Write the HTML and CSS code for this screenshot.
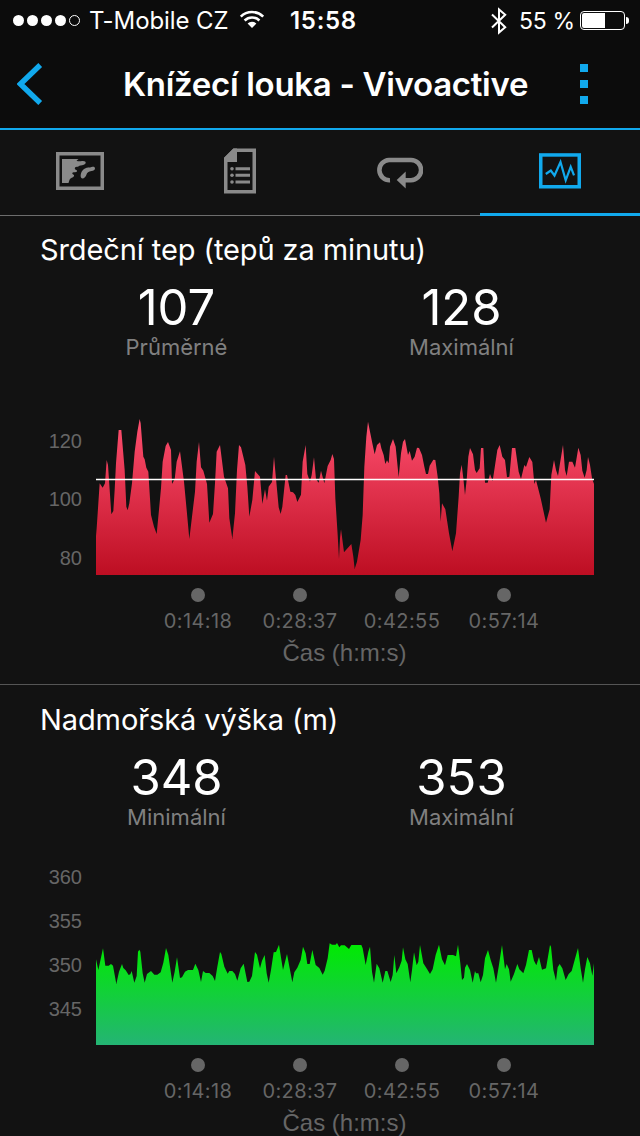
FILE: index.html
```
<!DOCTYPE html>
<html lang="cs">
<head>
    <meta charset="UTF-8">
    <meta name="viewport" content="width=device-width, initial-scale=1.0">
    <title>Knížecí louka - Vivoactive</title>
    <link rel="stylesheet" href="styles.css">
</head>
<body>
    <div class="status-bar">
        <div class="status-left">
            <div class="signal"><i></i><i></i><i></i><i></i><i class="empty"></i></div>
            <span class="carrier">T-Mobile CZ</span>
            <svg class="wifi" width="26" height="19" viewBox="0 0 26 19">
                <path d="M1.8 6.6a16 16 0 0 1 22.4 0M5.6 10.5a10.6 10.6 0 0 1 14.8 0" fill="none" stroke="#fff" stroke-width="2.6"/>
                <path d="M8.6 13.6a6.400 6.400 0 0 1 8.800 0L13 18z" fill="#fff"/>
            </svg>
        </div>
        <span class="clock">15:58</span>
        <div class="status-right">
            <svg class="bluetooth" width="16" height="28" viewBox="0 0 16 28">
                <path d="M1 7.5l13.2 12.7L8 25.5V2.5l6.2 5.3L1 20.5" fill="none" stroke="#fff" stroke-width="2"/>
            </svg>
            <span class="percent">55 %</span>
            <div class="battery"><div class="battery-level" style="width: 55%"></div></div>
            <div class="battery-cap"></div>
        </div>
    </div>

    <header class="header">
        <svg class="back" width="26" height="42" viewBox="0 0 26 42">
            <path d="M23.2 2L3.5 21l19.7 19" fill="none" stroke="#11a9ed" stroke-width="5.4"/>
        </svg>
        <h1>Knížecí louka - Vivoactive</h1>
        <div class="menu"><i></i><i></i><i></i></div>
    </header>

    <nav class="tabs">
        <div class="tab">
            <svg width="48" height="38" viewBox="0 0 48 38">
                <rect x="1.75" y="1.75" width="44.5" height="34.5" fill="none" stroke="#8a8a8a" stroke-width="3.5"/>
                <path d="M6 7h16.500l-2 1.800c2 .8 3.500.5 5.500.2 2.500-.3 4 .5 3.700 2-.3 1.800-3 2.200-5.200 2.400-1.800.3-1.800 1.400-3.500 1.400-2 0-2.500 1-2 2.400l2 1.300c.5 1.500-1.500 1.800-3.500 1.800-2 .5-1.500 1.800.5 2.700.5 2-2 2.500-3.500 3.500-1.500 1.200-1.200 3-2 4.500H6z" fill="#8a8a8a"/>
                <path d="M25 25.500c-1-3 .5-7 3.500-8.800 3-1.700 5-.7 7-1.700 2-.8 3.500-.2 3.500 1.300 0 2-1.700 2.700-3.500 2.700-3 .3-4.500 1.700-5 3.500-.7 2.500-4 5.800-5.500 3z" fill="#8a8a8a"/>
            </svg>
        </div>
        <div class="tab">
            <svg width="32" height="46" viewBox="0 0 32 46">
                <path d="M1.750 10.500L10 2.250h20.250v41.500H1.750z" fill="none" stroke="#8a8a8a" stroke-width="3.500"/>
                <path d="M0 10L9.500.5H13V14H0z" fill="#8a8a8a"/>
                <path d="M11.500 20.700H26M11.500 27.300H26M11.500 34H26" stroke="#8a8a8a" stroke-width="3"/>
                <g fill="#8a8a8a">
                    <circle cx="8" cy="20.700" r="1.800"/>
                    <circle cx="8" cy="27.300" r="1.800"/>
                    <circle cx="8" cy="34" r="1.800"/>
                </g>
            </svg>
        </div>
        <div class="tab">
            <svg class="laps" width="46" height="32" viewBox="0 0 46 32">
                <path d="M13 23.200a10 10 0 0 1-1-20.200h22a10 10 0 0 1 0 20.200h-7" fill="none" stroke="#8a8a8a" stroke-width="4.600"/>
                <path d="M28.700 14.500V31.500L19.700 23z" fill="#8a8a8a"/>
            </svg>
        </div>
        <div class="tab active">
            <svg width="42" height="36" viewBox="0 0 42 36">
                <rect x="1.750" y="1.950" width="38.500" height="31.800" fill="none" stroke="#11a9ed" stroke-width="3.500"/>
                <path d="M6.800 21l5-3.500 3.700 5L21.500 9l5.200 18.300 5-13.500 3.300 8.500" fill="none" stroke="#11a9ed" stroke-width="2.200"/>
            </svg>
        </div>
    </nav>

    <section class="panel">
        <h2>Srdeční tep (tepů za minutu)</h2>
        <div class="stats">
            <div class="stat"><span class="value">107</span><span class="label">Průměrné</span></div>
            <div class="stat"><span class="value">128</span><span class="label">Maximální</span></div>
        </div>
        <div class="chart">
            <div class="y-axis heart"><span>120</span><span>100</span><span>80</span></div>
            <svg width="498" height="165" viewBox="0 0 1494 495" preserveAspectRatio="none">
                <defs>
                    <linearGradient id="red" gradientUnits="userSpaceOnUse" x1="0" y1="27" x2="0" y2="495">
                        <stop offset="0" stop-color="#ff5070"/>
                        <stop offset="1" stop-color="#bd0e22"/>
                    </linearGradient>
                </defs>
                <polygon fill="url(#red)" points="0,495 0,378 2,355 11,220 20,233 27,220 32,150 36,165 46,313 52,303 56,240 60,160 68,60 76,60 86,180 91,290 95,301 100,280 108,220 116,125 124,65 131,27 134,40 142,140 146,148 151,173 157,185 165,315 174,350 182,372 188,310 195,235 200,155 209,108 216,96 225,120 228,222 236,208 242,155 252,124 264,215 272,300 280,387 288,320 297,245 302,155 309,96 315,172 322,182 333,222 340,338 351,312 357,220 362,125 372,105 384,200 396,235 400,325 409,387 417,310 423,180 429,105 435,112 448,165 454,230 460,320 469,270 477,183
                    492,200 499,282 507,238 513,272 518,230 528,216 534,140 539,195 548,292 554,312 559,290 569,195 573,195 583,245 591,247 598,255 604,276 615,254 620,155 629,105 634,192 642,215 647,195 654,142 660,208 668,218 675,182 685,220 695,168 704,150 709,132 714,147 718,265 725,375 729,447 732,385 735,358 744,427 766,402 772,440 776,477 783,455 794,390 800,315 805,170 811,80 816,35 822,65 829,100 836,133 843,105 852,97 856,115 863,135 868,162 873,151 878,160 882,110 891,87 899,110 908,202 915,130 921,95 927,87 936,135 941,123 948,152 956,140 963,113 969,114 978,135 985,170
                    990,192 996,192 1001,167 1012,149 1018,150 1025,200 1030,250 1034,335 1038,280 1048,298 1059,370 1069,424 1080,370 1088,260 1092,190 1097,164 1102,205 1107,255 1112,210 1117,140 1122,114 1131,133 1137,180 1142,189 1151,175 1155,114 1162,114 1167,218 1175,218 1182,192 1190,213 1198,160 1204,120 1211,105 1219,140 1227,150 1233,202 1240,200 1248,114 1258,114 1268,185 1275,207 1285,165 1290,171 1300,141 1309,156 1315,222 1320,210 1334,265 1350,338 1361,298 1366,195 1374,150 1380,180 1386,198 1392,160 1401,105 1407,180 1412,198 1419,155 1429,155 1437,173 1447,113 1454,135 1459,182 1466,203 1472,180 1476,141 1482,165 1488,205 1494,222 1494,495"/>
                <path d="M0 208.500H1494" stroke="#fff" stroke-width="4"/>
            </svg>
        </div>
        <div class="x-axis"><span>0:14:18</span><span>0:28:37</span><span>0:42:55</span><span>0:57:14</span></div>
        <div class="axis-title">Čas (h:m:s)</div>
    </section>

    <section class="panel">
        <h2>Nadmořská výška (m)</h2>
        <div class="stats">
            <div class="stat"><span class="value">348</span><span class="label">Minimální</span></div>
            <div class="stat"><span class="value">353</span><span class="label">Maximální</span></div>
        </div>
        <div class="chart">
            <div class="y-axis altitude"><span>360</span><span>355</span><span>350</span><span>345</span></div>
            <svg width="498" height="115" viewBox="0 0 1494 345" preserveAspectRatio="none">
                <defs>
                    <linearGradient id="green" gradientUnits="userSpaceOnUse" x1="0" y1="39" x2="0" y2="345">
                        <stop offset="0" stop-color="#00eb00"/>
                        <stop offset="1" stop-color="#24b474"/>
                    </linearGradient>
                </defs>
                <polygon fill="url(#green)" points="0,345 0,88 7,120 21,55 28,107 38,107 45,102 51,107 61,162 69,125 78,102 82,114 89,121 98,135 103,133 107,123 115,158 122,138 126,65 130,59 133,65 140,130 146,158 153,132 165,123 175,134 184,134 194,127 202,98 210,54 217,75 229,158 236,125 243,82 252,144 258,142 267,125 276,120 291,120 298,101 307,120 315,156 321,123 329,129 340,129 350,138 357,153 364,110 372,66 376,72 385,110 395,131 400,123 409,123 417,132 424,152 434,115 443,101 454,156 460,155 468,138 477,66 483,74 492,115 498,92 506,75 512,130 518,158 525,120 533,67 540,66 549,44 553,70 561,120 573,72 581,115 589,157 595,127 604,113 614,90 621,50 629,70 634,102 641,102 649,60 659,105 670,114 680,134 686,122 695,85 701,40 708,44 719,44 723,39 730,52
                    735,46 746,46 759,57 766,45 796,45 800,55 809,105 817,65 822,50 828,125 834,158 842,101 850,115 860,158 868,123 874,123 884,156 890,135 895,75 901,130 910,112 917,92 921,52 928,88 935,102 943,157 948,120 954,67 962,106 967,95 972,45 982,100 993,117 1002,132 1010,118 1019,75 1029,44 1038,88 1047,106 1055,75 1071,75 1080,79 1086,44 1093,100 1098,150 1104,143 1107,113 1113,102 1122,120 1130,158 1137,123 1140,130 1147,130 1154,157 1161,135 1167,85 1176,60 1184,90 1192,115 1200,158 1208,110 1218,45 1227,118 1232,102 1239,118 1244,155 1254,132 1264,102 1270,118 1282,130 1290,105 1299,60 1307,60 1314,92 1321,106 1329,81 1338,119 1350,115 1362,45 1365,50 1372,120 1380,152 1385,112 1391,102 1399,115 1409,150 1418,132 1427,123 1436,90 1446,54 1454,115 1461,158 1467,118 1474,81 1482,100 1489,137 1494,100 1494,345"/>
            </svg>
        </div>
        <div class="x-axis"><span>0:14:18</span><span>0:28:37</span><span>0:42:55</span><span>0:57:14</span></div>
        <div class="axis-title">Čas (h:m:s)</div>
    </section>
</body>
</html>
```
FILE: styles.css
```
* {
    box-sizing: border-box;
}
body {
    margin: 0;
    width: 640px;
    height: 1136px;
    overflow: hidden;
    background-color: #121212;
    color: #fff;
    font-family: Inter, "Liberation Sans", sans-serif;
}
svg {
    display: block;
    flex: none;
}
.status-bar {
    display: grid;
    grid-template-columns: 290px 66px 1fr;
    align-items: center;
    height: 40px;
    padding-top: 1px;
    background-color: #0c0c0c;
    white-space: nowrap;
}
.status-left, .status-right {
    display: flex;
    align-items: center;
}
.status-left {
    padding-left: 13px;
}
.signal {
    display: flex;
    gap: 3px;
}
.signal i {
    width: 11px;
    height: 11px;
    border-radius: 50%;
    background-color: #fff;
}
.signal .empty {
    background: none;
    border: 1px solid #fff;
}
.carrier {
    width: 140px;
    margin-left: 9px;
    font-size: 24px;
    letter-spacing: -0.1px;
}
.wifi {
    margin-left: 10px;
    margin-top: -2px;
}
.clock {
    font-size: 24px;
    font-weight: 600;
    letter-spacing: 0.7px;
}
.status-right {
    justify-content: flex-end;
    padding-right: 11px;
}
.percent {
    width: 55px;
    margin-left: 12px;
    font-size: 23px;
    letter-spacing: -0.3px;
}
.battery {
    width: 45px;
    height: 19px;
    margin-left: 6px;
    padding: 1px;
    border: 1px solid #fff;
    border-radius: 4px;
}
.battery-level {
    height: 100%;
    background-color: #fff;
    border-radius: 2px 0 0 2px;
}
.battery-cap {
    width: 3px;
    height: 7px;
    margin-left: 1px;
    background-color: #fff;
    border-radius: 0 3px 3px 0;
}
.header {
    display: grid;
    grid-template-columns: 76px 1fr 76px;
    align-items: center;
    height: 90px;
    background-color: #0c0c0c;
    border-bottom: 2px solid #11a9ed;
}
.back {
    margin-left: 17px;
}
h1 {
    margin: 0;
    padding-left: 11px;
    font-size: 33px;
    font-weight: 600;
    letter-spacing: -0.3px;
    text-align: center;
    white-space: nowrap;
}
.menu {
    display: flex;
    flex-direction: column;
    gap: 8px;
    padding-left: 16px;
}
.menu i {
    width: 8px;
    height: 8px;
    background-color: #11a9ed;
}
.tabs {
    display: grid;
    grid-template-columns: repeat(4, 1fr);
    height: 86px;
}
.tab {
    display: flex;
    align-items: center;
    justify-content: center;
    padding-bottom: 3px;
    border-bottom: 1px solid #6d6d6d;
}
.tab.active {
    padding-bottom: 2px;
    border-bottom: 3px solid #11a9ed;
}
.laps {
    margin-top: 4px;
}
.panel {
    height: 469px;
    padding-top: 14px;
    border-bottom: 1px solid #555;
}
.panel + .panel {
    padding-top: 15px;
    border-bottom: none;
}
h2 {
    margin: 0 0 13px 40px;
    font-size: 29px;
    font-weight: 400;
    letter-spacing: -0.1px;
    line-height: 40px;
}
.stats {
    display: grid;
    grid-template-columns: 285px 285px;
    padding-left: 34px;
    text-align: center;
}
.stat {
    display: flex;
    flex-direction: column;
}
.value {
    font-size: 49px;
    line-height: 50px;
}
.label {
    font-size: 22px;
    line-height: 28px;
    color: #808080;
}
.chart {
    display: flex;
    align-items: flex-end;
    height: 165px;
    margin-top: 49px;
}
.y-axis {
    display: grid;
    width: 96px;
    height: 165px;
    padding-right: 14px;
    font-family: "Liberation Sans", sans-serif;
    font-size: 20px;
    text-align: right;
    align-items: center;
    color: #666;
}
.y-axis.heart {
    grid-template-rows: repeat(3, 58.5px);
    padding-top: 2px;
}
.y-axis.altitude {
    height: 190px;
    grid-template-rows: repeat(4, 44px);
}
.x-axis {
    display: grid;
    grid-template-columns: repeat(4, 102px);
    margin: 13px 0 0 147px;
    font-size: 20px;
    letter-spacing: 0.4px;
    line-height: 24px;
    text-align: center;
    color: #666;
}
.x-axis span::before {
    content: "";
    display: block;
    width: 14px;
    height: 14px;
    margin: 0 auto 7px;
    border-radius: 50%;
    background-color: #666;
}
.axis-title {
    margin-top: 5px;
    padding-left: 49px;
    font-family: "Liberation Sans", sans-serif;
    font-size: 24px;
    line-height: 30px;
    text-align: center;
    color: #666;
}
```
